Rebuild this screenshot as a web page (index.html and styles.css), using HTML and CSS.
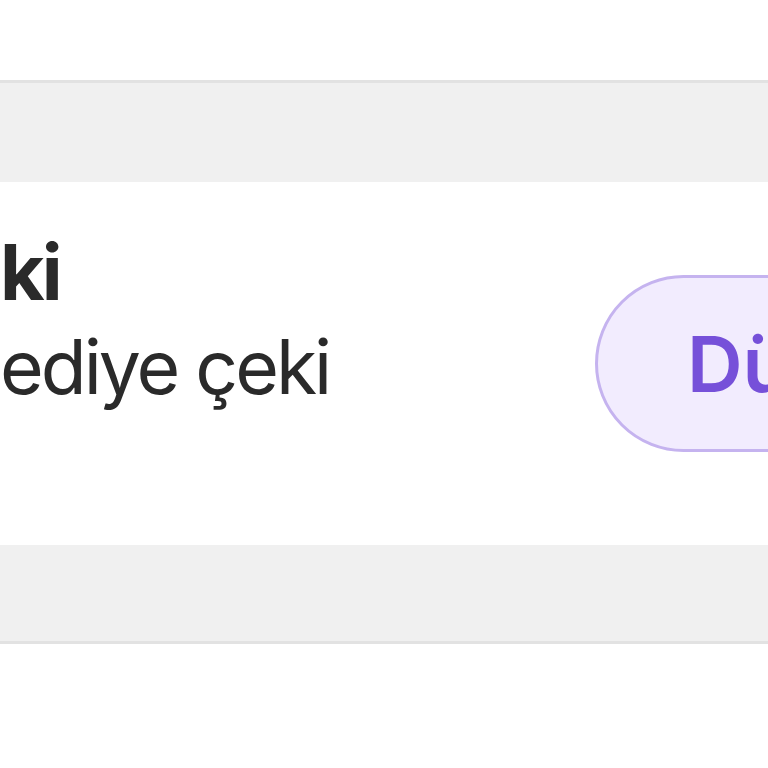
FILE: index.html
```html
<!DOCTYPE html>
<html lang="tr">
<head>
<meta charset="utf-8">
<link rel="stylesheet" href="styles.css">
</head>
<body>
<div class="page">
  <div class="top"></div>
  <div class="band band-top"></div>
  <div class="card">
    <div class="texts">
      <div class="title">ki</div>
      <div class="subtitle">ediye çeki</div>
    </div>
    <button class="edit">Düzenle</button>
  </div>
  <div class="band band-bottom"></div>
  <div class="bottom"></div>
</div>
</body>
</html>
```
FILE: styles.css
```css
html, body {
  margin: 0;
  padding: 0;
  background: #ffffff;
  overflow: hidden;
  width: 768px;
  height: 768px;
}
.page {
  display: flex;
  flex-direction: column;
  width: 768px;
  font-family: Inter, "Noto Sans", sans-serif;
}
.top {
  height: 80px;
  background: #ffffff;
}
.band {
  background: #f0f0f0;
}
.band-top {
  height: 99px;
  border-top: 3px solid #e2e2e2;
}
.band-bottom {
  height: 96px;
  border-bottom: 3px solid #e2e2e2;
}
.card {
  height: 363px;
  background: #ffffff;
  display: flex;
  align-items: center;
  overflow: hidden;
}
.texts {
  flex: 0 0 595px;
  align-self: flex-start;
  padding-top: 47px;
  color: #2a2a2a;
}
.title {
  font-size: 77px;
  line-height: 92px;
  font-weight: 700;
  letter-spacing: -3px;
  margin-top: -3px;
  margin-bottom: 3px;
}
.subtitle {
  font-size: 75px;
  line-height: 92px;
  font-weight: 400;
  letter-spacing: -3px;
}
.edit {
  flex: 0 0 auto;
  height: 177px;
  box-sizing: border-box;
  border: 3px solid #c5b3ef;
  border-radius: 89px;
  background: #f2ecfe;
  color: #7650d9;
  font-family: Inter, "Noto Sans", sans-serif;
  font-size: 77px;
  font-weight: 600;
  padding: 0 90px 0 89px;
  white-space: nowrap;
}
```
